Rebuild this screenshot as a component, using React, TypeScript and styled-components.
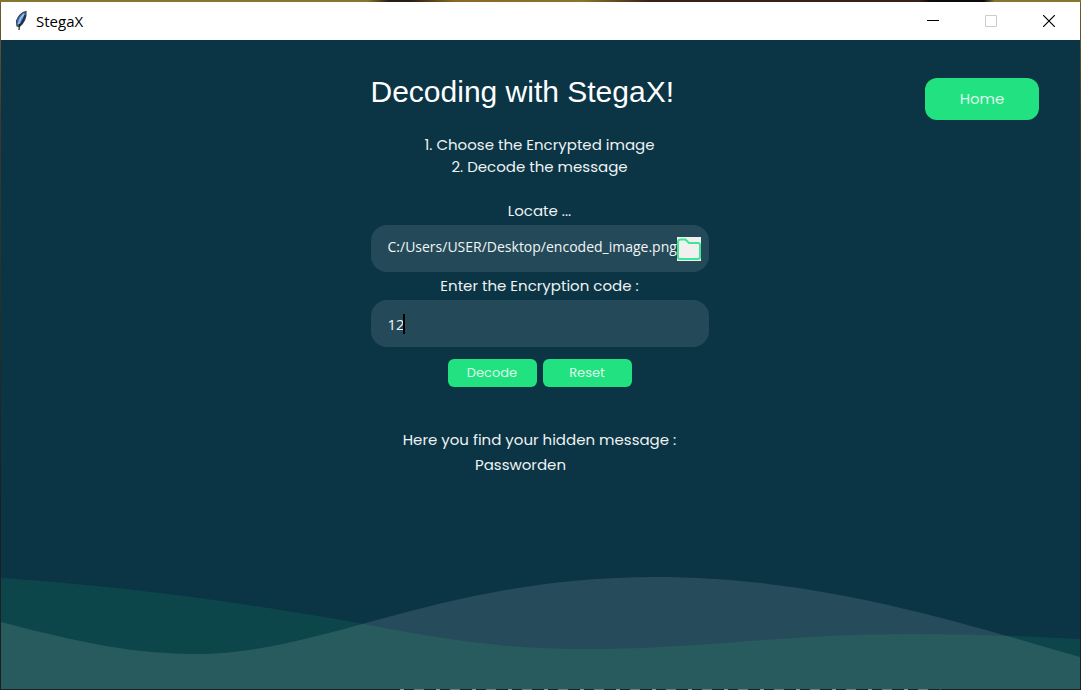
import React, { useState } from "react";
import styled, { createGlobalStyle } from "styled-components";

const display = `"Liberation Sans", Arial, sans-serif`;
const rounded = `Poppins, Inter, sans-serif`;
const system = `"Segoe UI", "Open Sans", sans-serif`;

const GlobalStyle = createGlobalStyle`
  * { box-sizing: border-box; }
  body { margin: 0; background: #1c2426; }
  button, input { font: inherit; border: 0; margin: 0; }
`;

const Desktop = styled.div`
  min-height: 100vh;
  display: flex;
  flex-direction: column;
  padding: 2px 1px 1px;
  background:
    linear-gradient(90deg, #85762f 0 34%, #2a1c12 36% 38%, #8a6a20 42%, #8a7428 54%, #3a2118 60% 85%, #0c0a0a 86% 91%, #85762f 92%) top / 100% 2px no-repeat,
    repeating-linear-gradient(90deg, #8a9293 0 4px, #1c2426 4px 14px, #6f7778 14px 24px, #1c2426 24px 36px) 74% 100% / 50% 1px no-repeat,
    linear-gradient(#6d6030, #3c3a2c 120px, #1c2022 500px);
`;

const Window = styled.div`
  flex: 1;
  display: flex;
  flex-direction: column;
  background: #0b3545;
`;

const TitleBar = styled.header`
  display: flex;
  align-items: center;
  height: 38px;
  padding: 0 2px 0 12px;
  background: #ffffff;
  color: #000000;
`;

const WindowTitle = styled.span`
  flex: 1;
  padding-left: 7px;
  font: 15px/20px ${system};
`;

const WindowButton = styled.button`
  display: grid;
  place-items: center;
  width: 58px;
  height: 38px;
  padding: 0;
  background: transparent;
  color: #000000;
  &:disabled { color: #cccccc; }
`;

const Page = styled.main`
  display: grid;
  grid-template-columns: minmax(0, 1fr) 338px minmax(0, 1fr);
  align-items: start;
  padding: 32px 41px 0 39px;
`;

const Decoder = styled.section`
  grid-column: 2;
  display: flex;
  flex-direction: column;
  color: #eef2f3;
  font: 15px/22px ${rounded};
  text-align: center;
`;

const Heading = styled.h1`
  margin: 0;
  color: #ffffff;
  font: 30px/40px ${display};
  text-align: left;
  white-space: nowrap;
`;

const Steps = styled.ol`
  margin: 22px 0 19px;
  padding: 0;
  list-style-position: inside;
`;

const Label = styled.label`
  line-height: 28px;
`;

const Field = styled.div`
  position: relative;
  display: flex;
  align-items: center;
  height: 47px;
  padding: 0 8px 0 17px;
  border-radius: 16px;
  background: #244a59;
`;

const TextInput = styled.input<{ $compact?: boolean }>`
  flex: 1;
  min-width: 0;
  height: 28px;
  padding: 0 0 ${(p) => (p.$compact ? 4 : 0)}px;
  background: transparent;
  color: #f2f5f6;
  font: ${(p) => (p.$compact ? 14 : 15)}px/24px ${system};
  outline: none;
`;

const Caret = styled.span`
  position: absolute;
  left: 32px;
  top: 14px;
  width: 2px;
  height: 20px;
  background: #000000;
`;

const BrowseButton = styled.button`
  width: 24px;
  height: 24px;
  padding: 0;
  background: #f0f0f0;
  svg { display: block; }
`;

const Actions = styled.div`
  display: flex;
  justify-content: center;
  gap: 6px;
  padding: 12px 0 39px;
`;

const GreenButton = styled.button<{ $large?: boolean }>`
  width: ${(p) => (p.$large ? 114 : 89)}px;
  height: ${(p) => (p.$large ? 42 : 28)}px;
  padding: 0;
  border-radius: ${(p) => (p.$large ? 12 : 6)}px;
  background: #22e180;
  color: #dcfbea;
  font: ${(p) => (p.$large ? 15 : 13)}px/20px ${rounded};
`;

const HomeArea = styled.nav`
  grid-column: 3;
  display: flex;
  justify-content: flex-end;
  padding-top: 6px;
`;

const Message = styled.output`
  padding-right: 38px;
  line-height: 22px;
`;

const Waves = styled.svg`
  display: block;
  width: 100%;
  height: 112px;
  margin-top: auto;
`;

export default function App() {
  const [path, setPath] = useState("C:/Users/USER/Desktop/encoded_image.png");
  const [code, setCode] = useState("12");
  const reset = () => {
    setPath("");
    setCode("");
  };

  return (
    <Desktop>
      <GlobalStyle />
      <Window>
        <TitleBar>
          <svg width="16" height="22" viewBox="0 0 16 22" aria-hidden="true">
            <path d="M13 1.500C9 2 5 6 3.500 11L4 16L6.500 16.500C10.500 13 13.500 7 13 1.500Z" fill="#3f74b8" stroke="#39424f" strokeWidth="1.200" />
            <path d="M11 4C8 7 6.500 10 5.500 14" stroke="#8fbcf0" strokeWidth="2" fill="none" />
            <path d="M12 5C11 10 9 13 6.500 15.500" stroke="#1d2b40" strokeWidth="1.500" fill="none" />
            <path d="M6.500 14L6 20" stroke="#222222" strokeWidth="1.200" fill="none" />
          </svg>
          <WindowTitle>StegaX</WindowTitle>
          <WindowButton aria-label="Minimize">
            <svg width="12" height="12"><path d="M0 5.500H12" stroke="currentColor" /></svg>
          </WindowButton>
          <WindowButton aria-label="Maximize" disabled>
            <svg width="12" height="12"><path d="M.5 .5H11.500V11.500H.5Z" fill="none" stroke="currentColor" /></svg>
          </WindowButton>
          <WindowButton aria-label="Close">
            <svg width="12" height="12"><path d="M0 0L12 12M12 0L0 12" stroke="currentColor" strokeWidth="1.2" /></svg>
          </WindowButton>
        </TitleBar>
        <Page>
          <Decoder>
            <Heading>Decoding with StegaX!</Heading>
            <Steps>
              <li>Choose the Encrypted image</li>
              <li>Decode the message</li>
            </Steps>
            <Label htmlFor="path">Locate ...</Label>
            <Field>
              <TextInput id="path" $compact value={path} onChange={(e) => setPath(e.target.value)} />
              <BrowseButton aria-label="Browse">
                <svg width="24" height="24" viewBox="0 0 24 24">
                  <path d="M1 20V5Q1 2.500 3.500 2.500H8.500L12 6H21Q23 6 23 8V20Q23 22 21 22H3Q1 22 1 20Z" fill="#f0f0f0" stroke="#3fe594" strokeWidth="2" />
                </svg>
              </BrowseButton>
            </Field>
            <Label htmlFor="code">Enter the Encryption code :</Label>
            <Field>
              <TextInput id="code" value={code} onChange={(e) => setCode(e.target.value)} />
              <Caret />
            </Field>
            <Actions>
              <GreenButton>Decode</GreenButton>
              <GreenButton onClick={reset}>Reset</GreenButton>
            </Actions>
            <Label as="span">Here you find your hidden message :</Label>
            <Message>Passworden</Message>
          </Decoder>
          <HomeArea>
            <GreenButton $large>Home</GreenButton>
          </HomeArea>
        </Page>
        <Waves viewBox="0 0 1079 112" preserveAspectRatio="none" aria-hidden="true">
          <path d="M0 1C120 9 240 25 363 47C450 64 510 72 585 72C700 72 780 57 910 57C970 57 1030 59 1079 62V112H0Z" fill="#0c464a" />
          <path d="M0 45C80 66 135 77 195 77C325 77 440 0 655 0C820 0 960 46 1079 80V112H0Z" fill="#ffffff" fillOpacity=".115" />
        </Waves>
      </Window>
    </Desktop>
  );
}
